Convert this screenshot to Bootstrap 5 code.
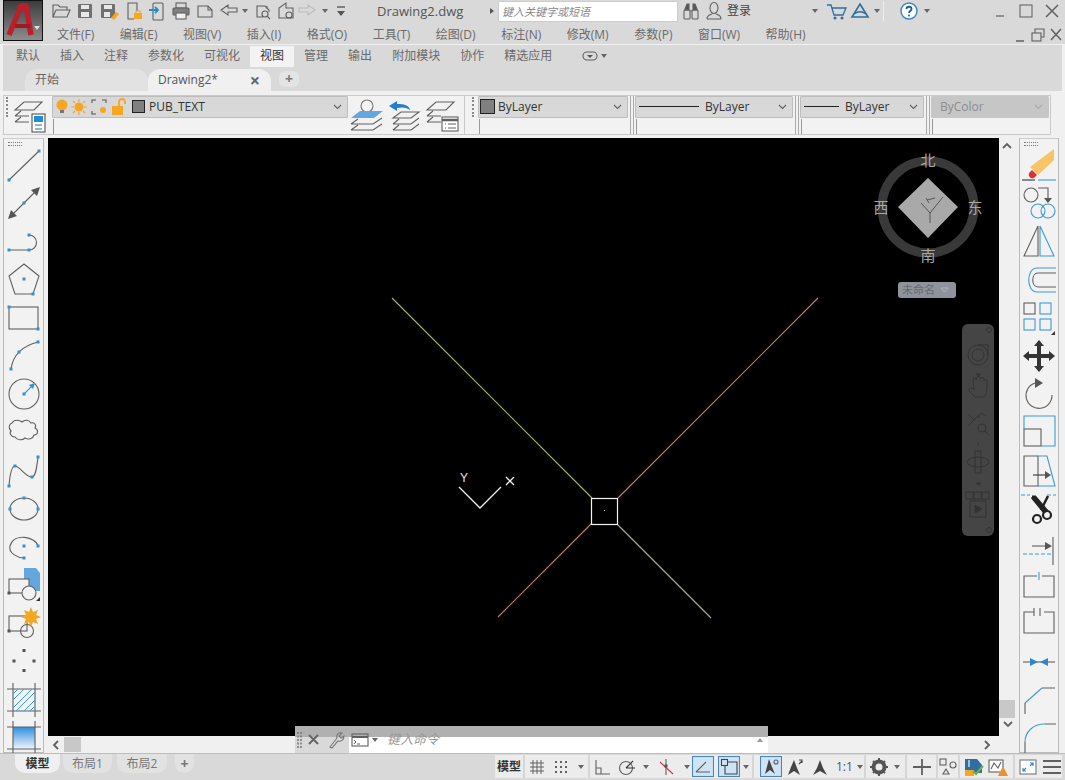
<!DOCTYPE html>
<html lang="zh-CN">
<head>
<meta charset="utf-8">
<title>Drawing2.dwg</title>
<link href="https://cdn.jsdelivr.net/npm/bootstrap@5.3.0/dist/css/bootstrap.min.css" rel="stylesheet">
<style>
html,body{margin:0;height:100%;overflow:hidden}
body{font-family:"Open Sans","Noto Sans CJK SC",sans-serif;font-size:12px;line-height:1;background:#f0f0f0;color:#555}
.app-shell{width:1065px;height:780px;overflow:hidden;background:#f0f0f0}
svg{display:block;flex:none;fill:none;stroke:#606060;stroke-width:1.1}
.bl{stroke:#3d9ad6}.bf{fill:#3a8fc9;stroke:none}.dk{fill:#555;stroke:none}.or{fill:#f5a623;stroke:none}
.hdr{height:44px;background:#d9d9d9}
.logo-box{width:40px;height:41px;margin-left:3px;border:1px solid #111;background:linear-gradient(#3c3c3c,#8d8d8d);flex:none}
.hdr-main{min-width:0}
.row-title{height:22px;padding-left:4px}
.row-menu{height:22px;padding-left:14px;padding-top:4px;gap:25.5px;color:#6a6a6a}
.caret-d{width:0;height:0;flex:none;border:3px solid transparent;border-top:4px solid #666;border-bottom:0;margin:0 1px}
.caret-r{width:0;height:0;flex:none;border:3px solid transparent;border-left:4px solid #555;border-right:0;margin-left:1px}
.doc-name{width:138px;padding-left:26px;font-size:13px;flex:none}
.search-box{width:180px;height:21px;background:#fff;border:1px solid #ccc;font-style:italic;font-size:11px;color:#888;padding-left:3px;margin-left:4px;display:flex;align-items:center;flex:none}
.login-txt{width:84px;margin-left:3px;flex:none;color:#444}
.v-sep{width:1px;height:20px;background:#eee;margin:0 13px 0 2px}
.gap-6{margin-left:6px}.gap-3{margin-left:3px}.gap-2p{margin-left:2px}
.rib-tabs{height:23px;margin:0 3px;background:#d9d9d9;padding:1px 0 0 3px;border-top:1px solid #f0f0f0;color:#6a6a6a}
.rib-tab{padding:0 10px;height:100%;display:flex;align-items:center}
.rib-tab-on{background:#f3f3f3;color:#333}
.rib-more{margin-left:20px}
.file-tabs{height:24px;margin:0 3px;background:#d9d9d9;padding-left:22px}
.file-tab{width:123px;height:22px;background:#e2e2e2;border-radius:12px 12px 0 0;display:flex;align-items:center;padding-left:10px;color:#666}
.file-tab-on{width:123px;background:#f0f0f0;color:#555;padding-left:10px;justify-content:space-between;padding-right:11px}
.tab-x{font-size:18px;color:#666;font-weight:700}
.tab-plus{width:20px;height:16px;margin-left:8px;background:#e4e4e4;border-radius:6px;display:flex;align-items:center;justify-content:center;color:#777;font-size:14px;font-weight:700}
.tool-wrap{height:48px;padding:4px 0 0 3px}
.pnl-main{width:462px;height:40px;border:1px solid #c9c9c9;background:#f2f2f2}
.pnl-rest{width:586px;height:40px;border:1px solid #c9c9c9;border-left:0;background:#f2f2f2;padding-left:5px}
.grip-v{width:3px;height:20px;margin:1px 0 0 2px;border-left:2px dotted #888;flex:none}
.grip-wrap{width:8px;flex:none}
.sep-box{width:7px;padding-left:1px;flex:none}
.sep-v{width:4px;height:38px;margin-left:1px;border-left:1px solid #aaa;border-right:1px solid #aaa}
.cell-col{flex:none}
.cell-1{width:296px;margin-left:2px}.cell-2{width:150px}.cell-3{width:158px}.cell-4{width:124px}.cell-5{width:118px}
.combo-top{height:22px;background:#d8d8d8;border:1px solid #bdbdbd;border-radius:1px;color:#333;display:flex;align-items:center;padding:0 5px 0 3px}
.combo-tight{padding-left:0}
.combo-swatch{padding-left:1px}
.combo-off{background:#c6c6c6;color:#8d8d8d;border-color:#c6c6c6;padding-left:8px}
.combo-low{height:15px;margin-top:1px;border-left:1px solid #999;margin-left:1px}
.swatch{width:13px;height:13px;background:#808080;border:1px solid #222;flex:none}
.swatch-lg{width:15px;height:15px}
.swatch-gap{margin-left:4px}
.chev{margin-left:auto}
.line-smp{height:1px;background:#222;flex:none}
.line-l{width:60px;margin-right:6px}
.line-m{width:35px;margin-right:6px}
.main-row{height:615px}
.side-bar{width:41px;height:615px;margin-left:3px;border:1px solid #bbb;border-top-color:#ccc;background:#f2f2f2;flex:none}
.side-r{width:40px;margin-left:4px}
.grip-h{width:14px;height:4px;margin:3px 0 0 4px;border-top:1px dotted #777;border-bottom:1px dotted #777}
.slot-stack{display:flex;flex-direction:column;align-items:center;padding-top:1px}
.slot-stack svg{margin-bottom:2.2px}
.center-col{width:967px;margin-left:4px;position:relative;flex:none}
.canvas-row{height:598px}
.draw-area{width:951px;height:598px;background:#000;position:relative;flex:none}
.draw-area>svg{position:absolute;left:0;top:0}
.nav-bar{position:absolute;left:914px;top:186px;width:32px;height:212px;background:#454545;border-radius:6px}
.v-scroll{width:16px;position:relative}
.v-thumb{position:absolute;left:0;right:0;top:562px;height:18px;background:#c8c8c8}
.h-scroll{height:17px;padding:0 0 0 4px}
.h-thumb{width:17px;height:15px;background:#c8c8c8;margin-left:4px}
.cmd-bar{position:absolute;left:247px;bottom:0;width:473px;height:27px;background:linear-gradient(#b0b0b0 11px,#fff 11px)}
.cmd-left{width:54px;height:27px;background:linear-gradient(#b0b0b0 11px,#d9d9d9 11px);flex:none}
.cmd-hint{font-style:italic;color:#999;font-size:13px;margin-left:8px;flex:none;position:relative}
.cmd-dd{position:absolute;left:462px;top:12px;border:3px solid transparent;border-bottom:4px solid #999;border-top:0}
.status-row{height:27px;background:#d9d9d9;border-top:1px solid #bdbdbd}
.sheet-tab{height:19px;border-radius:0 0 10px 10px;display:flex;align-items:center;justify-content:center;color:#777;background:#e2e2e2}
.sheet-on{width:45px;margin-left:15px;background:#f0f0f0;color:#333;font-weight:600}
.sheet-a{width:49px;margin-left:3px}
.sheet-b{width:50px;margin-left:5px}
.sheet-add{width:19px;margin-left:8px;font-size:14px;font-weight:700}
.status-bar{width:567px;height:23px;margin-left:auto;margin-right:3px;margin-top:1px;background:#ececec}
.st-model{width:28px;text-align:center;color:#333;flex:none;font-weight:600}
.st-sep{width:2px;height:23px;background:#d6d6d6;flex:none}
.st-dd{display:flex;align-items:center;justify-content:center;flex:none}
.w-16{width:16px}.w-15{width:15px}.w-10{width:10px}.w-11{width:11px}.w-12{width:12px}
.st-scale{width:31px;padding-left:3px;color:#555;display:flex;align-items:center;flex:none}
</style>
</head>
<body>
<div class="app-shell d-flex flex-column">

<!-- header -->
<div class="hdr d-flex">
  <div class="logo-box">
    <svg width="38" height="39" viewBox="0 0 38 39"><path d="M5 34 17 5h5l5 29" stroke="#bb1f2b" stroke-width="5.500" stroke-linejoin="round"/><path d="M11 25H26" stroke="#a01822" stroke-width="4"/><path d="M30 25h6l-3 4z" fill="#ddd" stroke="none"/></svg>
  </div>
  <div class="hdr-main flex-grow-1 d-flex flex-column">
    <div class="row-title d-flex align-items-center">
      <svg width="26" height="20" viewBox="0 0 26 20"><path d="M6 16V4h5l2 2h7v3M6 16h14l3-7H9z"/></svg>
      <svg width="24" height="20" viewBox="0 0 24 20"><rect x="5" y="3" width="14" height="14" rx="1" fill="#707070" stroke="none"/><rect x="8" y="4" width="8" height="4" fill="#e8e8e8" stroke="none"/><rect x="8" y="11" width="8" height="5" fill="#e8e8e8" stroke="none"/></svg>
      <svg width="24" height="20" viewBox="0 0 24 20"><rect x="4" y="3" width="14" height="14" rx="1" fill="#707070" stroke="none"/><rect x="7" y="4" width="8" height="4" fill="#e8e8e8" stroke="none"/><rect x="7" y="11" width="6" height="5" fill="#e8e8e8" stroke="none"/><path d="M14 17l5-6 3 2-5 6z" class="or"/></svg>
      <svg width="24" height="20" viewBox="0 0 24 20"><path d="M16 10V2H7v16h6"/><rect x="13" y="12" width="8" height="6" class="or"/><path d="M15 12v-2h4v2" stroke="#f5a623"/></svg>
      <svg width="24" height="20" viewBox="0 0 24 20"><rect x="8" y="2" width="10" height="17" rx="1"/><path d="M4 9h9M10 6l3 3-3 3" stroke="#1f8fd0" stroke-width="1.800"/></svg>
      <svg width="24" height="20" viewBox="0 0 24 20"><rect x="7" y="2" width="10" height="5"/><rect x="4" y="7" width="16" height="7" rx="1" fill="#808080" stroke="#606060"/><rect x="7" y="12" width="10" height="6" fill="#f0f0f0"/></svg>
      <svg width="24" height="20" viewBox="0 0 24 20"><path d="M5 5h10l4 4v7H5z"/><path d="M15 5v4h4"/></svg>
      <svg width="24" height="20" viewBox="0 0 24 20"><path d="M4 9l7-5v3h9v4h-9v3z"/></svg>
      <span class="caret-d"></span>
      <svg width="28" height="20" viewBox="0 0 28 20"><path d="M14 16H8V5h8l4 4v2M18 8v-3"/><circle cx="16" cy="13" r="3"/><path d="M18 15l3 3"/></svg>
      <svg width="18" height="20" viewBox="0 0 18 20"><path d="M2 17V7l7-5v5h7v10z"/><circle cx="12" cy="14" r="3"/></svg>
      <svg width="24" height="20" viewBox="0 0 24 20"><path d="M20 9l-7-5v3H4v4h9v3z" stroke="#bbb"/></svg>
      <span class="st-dd w-12"><span class="caret-d"></span></span>
      <svg width="20" height="20" viewBox="0 0 20 20"><path d="M6 6h8" stroke-width="1.500"/><path d="M6 10h8l-4 5z" class="dk"/></svg>
      <span class="doc-name">Drawing2.dwg</span>
      <span class="caret-r"></span>
      <span class="search-box">键入关键字或短语</span>
      <svg width="26" height="20" viewBox="0 0 26 20"><path d="M7 8l2-5h2v6l-4 0zM19 8l-2-5h-2v6h4z" fill="#555"/><rect x="6" y="9" width="6" height="9" rx="1"/><rect x="14" y="9" width="6" height="9" rx="1"/><path d="M12 10h2"/></svg>
      <svg width="20" height="20" viewBox="0 0 20 20"><ellipse cx="10" cy="7" rx="4" ry="5.500"/><path d="M3 18c0-4 3-4 5-5M17 18c0-4-3-4-5-5M3 18h14"/></svg>
      <span class="login-txt">登录</span>
      <span class="caret-d"></span>
      <svg class="gap-6" width="24" height="20" viewBox="0 0 24 20"><path d="M2 4h4l3 10h9l3-7H7" stroke="#2d6f9f" stroke-width="1.300"/><circle cx="10" cy="17" r="1.500" fill="#2d6f9f" stroke="none"/><circle cx="17" cy="17" r="1.500" fill="#2d6f9f" stroke="none"/></svg>
      <svg width="22" height="20" viewBox="0 0 22 20"><path d="M11 3l8 13H3z" stroke="#2d6f9f" stroke-width="1.600"/><path d="M5 13c4-3 8-3 12 0" stroke="#2d6f9f" stroke-width="1.400"/></svg>
      <span class="caret-d gap-3"></span>
      <span class="v-sep"></span>
      <svg width="24" height="20" viewBox="0 0 24 20"><circle cx="12" cy="10" r="8" stroke="#3d86c6" stroke-width="1.500" fill="#fff"/><path d="M9.500 8c0-3 5-3 5 0 0 2-2.500 2-2.500 4" stroke="#1e5d9c" stroke-width="1.800"/><circle cx="12" cy="14.500" r="1" fill="#1e5d9c" stroke="none"/></svg>
      <span class="caret-d gap-3"></span>
      <div class="ms-auto d-flex">
        <svg width="26" height="20" viewBox="0 0 26 20"><path d="M9 15h8" stroke-width="1.500" stroke="#777"/></svg>
        <svg width="26" height="20" viewBox="0 0 26 20"><rect x="7" y="4" width="12" height="12" stroke="#666"/></svg>
        <svg width="26" height="20" viewBox="0 0 26 20"><path d="M7 4l12 12M19 4 7 16" stroke-width="1.500"/></svg>
      </div>
    </div>
    <div class="row-menu d-flex align-items-center">
      <span>文件(F)</span><span>编辑(E)</span><span>视图(V)</span><span>插入(I)</span><span>格式(O)</span><span>工具(T)</span><span>绘图(D)</span><span>标注(N)</span><span>修改(M)</span><span>参数(P)</span><span>窗口(W)</span><span>帮助(H)</span>
      <div class="ms-auto d-flex">
        <svg width="18" height="20" viewBox="0 0 18 20"><path d="M5 16h8" stroke-width="1.500"/></svg>
        <svg width="18" height="20" viewBox="0 0 18 20"><rect x="3" y="8" width="9" height="8"/><path d="M6 8V4h9v8h-3"/></svg>
        <svg width="18" height="20" viewBox="0 0 18 20"><path d="M4 4l10 11M14 4 4 15" stroke-width="1.500"/></svg>
      </div>
    </div>
  </div>
</div>

<!-- ribbon -->
<div class="rib-tabs d-flex align-items-center">
  <span class="rib-tab">默认</span><span class="rib-tab">插入</span><span class="rib-tab">注释</span><span class="rib-tab">参数化</span><span class="rib-tab">可视化</span><span class="rib-tab rib-tab-on">视图</span><span class="rib-tab">管理</span><span class="rib-tab">输出</span><span class="rib-tab">附加模块</span><span class="rib-tab">协作</span><span class="rib-tab">精选应用</span>
  <svg class="rib-more" width="16" height="12" viewBox="0 0 16 12"><rect x="1" y="2" width="14" height="8" rx="4"/><path d="M5 5h6l-3 3z" class="dk"/></svg>
  <span class="caret-d gap-3"></span>
</div>
<div class="file-tabs d-flex align-items-end">
  <div class="file-tab">开始</div>
  <div class="file-tab file-tab-on"><span>Drawing2*</span><span class="tab-x">×</span></div>
  <div class="tab-plus align-self-center">+</div>
</div>

<!-- property toolbar -->
<div class="tool-wrap d-flex">
  <div class="pnl-main d-flex">
    <div class="grip-wrap"><div class="grip-v"></div></div>
    <svg width="38" height="38" viewBox="0 0 38 38"><path d="M3 14 12 6h18l-8 8zM3 20l6-5M3 20h14M3 26l6-5M3 26h14"/><rect x="20" y="18" width="13" height="18" fill="#fff" stroke="#555"/><rect x="22" y="20" width="9" height="6" fill="#1f8fd8" stroke="none"/><path d="M23 29h7M30 33h-7" stroke="#1d6fa8"/></svg>
    <div class="cell-col cell-1">
      <div class="combo-top combo-tight">
        <svg width="18" height="18" viewBox="1 0 18 18"><circle cx="10" cy="7" r="5.500" class="or"/><rect x="8" y="12" width="4" height="3" fill="#777" stroke="none"/></svg>
        <svg width="16" height="18" viewBox="1 0 16 18"><circle cx="9" cy="9" r="4.500" class="or"/><path d="M9 1v3M9 14v3M1 9h3M14 9h3M3 3l2 2M13 13l2 2M3 15l2-2M13 5l2-2" stroke="#f5a623"/></svg>
        <svg class="gap-3" width="20" height="18" viewBox="0 0 20 18"><path d="M2 5V2h4M12 2h4v3M2 13v3h4" stroke="#555"/><circle cx="13" cy="12" r="3" class="or"/></svg>
        <svg width="18" height="18" viewBox="0 0 18 18"><rect x="2" y="8" width="11" height="9" class="or"/><path d="M9 8V4c0-4 6-4 6 0v2" stroke="#f5a623" stroke-width="1.800"/></svg>
        <span class="swatch swatch-gap"></span>
        <span class="ms-1">PUB_TEXT</span>
        <svg class="chev" width="9" height="6" viewBox="0 0 9 6"><path d="M1 1l3.500 3.500L8 1"/></svg>
      </div>
      <div class="combo-low"></div>
    </div>
    <svg width="38" height="38" viewBox="0 0 38 38"><circle cx="19" cy="10" r="6" stroke="#777" fill="#f5f5f5"/><path d="M3 22l9-7h23l-9 7z" fill="#62a7dd" stroke="none"/><path d="M3 28l7-5M3 28h22l9-6M3 34l7-5M3 34h22l9-6"/></svg>
    <svg width="38" height="38" viewBox="0 0 38 38"><path d="M3 10 11 5v3c7 0 12 1 13 6-4-3-8-3-13-2v3z" fill="#1f80cf" stroke="none"/><path d="M7 22l8-6h18l-8 6zM7 28l6-5M7 28h18l8-6M7 34l6-5M7 34h18l8-6"/></svg>
    <svg width="38" height="38" viewBox="0 0 38 38"><path d="M3 14 12 6h18l-8 8zM3 20l6-5M3 20h14M3 26l6-5M3 26h14"/><rect x="18" y="21" width="16" height="14" fill="#fff"/><path d="M18 24h16" stroke-width="2.500"/><path d="M21 28h1M24 28h8M21 32h1M24 32h8"/></svg>
  </div>
  <div class="pnl-rest d-flex">
    <div class="grip-wrap"><div class="grip-v"></div></div>
    <div class="cell-col cell-2">
      <div class="combo-top combo-swatch"><span class="swatch swatch-lg"></span><span class="gap-3">ByLayer</span><svg class="chev" width="9" height="6" viewBox="0 0 9 6"><path d="M1 1l3.500 3.500L8 1"/></svg></div>
      <div class="combo-low"></div>
    </div>
    <div class="sep-box"><div class="sep-v"></div></div>
    <div class="cell-col cell-3">
      <div class="combo-top"><span class="line-smp line-l"></span><span>ByLayer</span><svg class="chev" width="9" height="6" viewBox="0 0 9 6"><path d="M1 1l3.500 3.500L8 1"/></svg></div>
      <div class="combo-low"></div>
    </div>
    <div class="sep-box"><div class="sep-v"></div></div>
    <div class="cell-col cell-4">
      <div class="combo-top"><span class="line-smp line-m"></span><span>ByLayer</span><svg class="chev" width="9" height="6" viewBox="0 0 9 6"><path d="M1 1l3.500 3.500L8 1"/></svg></div>
      <div class="combo-low"></div>
    </div>
    <div class="sep-box"><div class="sep-v"></div></div>
    <div class="cell-col cell-5">
      <div class="combo-top combo-off"><span>ByColor</span><svg class="chev" width="9" height="6" viewBox="0 0 9 6"><path d="M1 1l3.500 3.500L8 1" stroke="#aaa"/></svg></div>
      <div class="combo-low"></div>
    </div>
  </div>
</div>

<!-- main -->
<div class="main-row d-flex">
  <div class="side-bar">
    <div class="grip-h"></div>
    <div class="slot-stack">
      <svg width="36" height="36" viewBox="0 0 36 36"><path d="M3 33 33 4"/><rect x="1.500" y="31.500" width="3" height="3" class="bf"/><rect x="31.500" y="2.500" width="3" height="3" class="bf"/></svg>
      <svg width="36" height="36" viewBox="0 0 36 36"><path d="M5 31 31 5"/><path d="M2 34l3-9 6 6zM34 2l-9 3 6 6z" class="dk"/><rect x="16.500" y="16.500" width="3" height="3" class="bf"/></svg>
      <svg width="36" height="36" viewBox="0 0 36 36"><path d="M3 26H23A7.500 7.500 0 0 0 23 11"/><rect x="1.500" y="24.500" width="3" height="3" class="bf"/><rect x="21.500" y="24.500" width="3" height="3" class="bf"/><rect x="21.500" y="9.500" width="3" height="3" class="bf"/></svg>
      <svg width="36" height="36" viewBox="0 0 36 36"><path d="M18 2 33 14 27 32H9L3 14z"/><rect x="16.500" y="15.500" width="3" height="3" class="bf"/><rect x="25.500" y="30.500" width="3" height="3" class="bf"/></svg>
      <svg width="36" height="36" viewBox="0 0 36 36"><rect x="3" y="7" width="29" height="22"/><rect x="1.500" y="5.500" width="3" height="3" class="bf"/><rect x="30.500" y="27.500" width="3" height="3" class="bf"/></svg>
      <svg width="36" height="36" viewBox="0 0 36 36"><path d="M5 31Q8 10 32 4"/><rect x="3.500" y="29.500" width="3" height="3" class="bf"/><rect x="11.500" y="12.500" width="3" height="3" class="bf"/><rect x="30.500" y="2.500" width="3" height="3" class="bf"/></svg>
      <svg width="36" height="36" viewBox="0 0 36 36"><circle cx="18" cy="18" r="15"/><path d="M18 18 27 9" class="bl"/><path d="M29 7l-2 6-4-4z" class="bf"/><rect x="16.500" y="16.500" width="3" height="3" class="bf"/></svg>
      <svg width="36" height="36" viewBox="0 0 36 36"><path d="M6 8c2-4 8-3 10-1 3-3 7-2 9 1 3-1 6 2 4 5 4 2 3 7-1 7-1 4-6 5-9 3-3 3-8 2-10-1-4 0-6-4-4-6-3-3-2-7 1-8z"/></svg>
      <svg width="36" height="36" viewBox="0 0 36 36"><path d="M3 33C4 20 6 13 9 13 14 13 19 24 26 24 30 24 31 12 32 4"/><rect x="1.500" y="31.500" width="3" height="3" class="bf"/><rect x="7.500" y="11.500" width="3" height="3" class="bf"/><rect x="24.500" y="22.500" width="3" height="3" class="bf"/><rect x="30.500" y="2.500" width="3" height="3" class="bf"/></svg>
      <svg width="36" height="36" viewBox="0 0 36 36"><ellipse cx="18" cy="18" rx="14" ry="11"/><rect x="2.500" y="16.500" width="3" height="3" class="bf"/><rect x="30.500" y="16.500" width="3" height="3" class="bf"/><rect x="16.500" y="5.500" width="3" height="3" class="bf"/></svg>
      <svg width="36" height="36" viewBox="0 0 36 36"><path d="M32 17C30 8 8 3 4 17c-2 7 8 12 14 12"/><rect x="16.500" y="27.500" width="3" height="3" class="bf"/><rect x="16.500" y="15.500" width="3" height="3" class="bf"/><rect x="30.500" y="15.500" width="3" height="3" class="bf"/></svg>
      <svg width="36" height="36" viewBox="0 0 36 36"><path d="M18 1h12l4 5v18H18z" fill="#62a7dd" stroke="none"/><rect x="3" y="12" width="20" height="14" fill="#f2f2f2"/><circle cx="23" cy="26" r="7" fill="#f2f2f2"/><rect x="1.500" y="24.500" width="3" height="3" class="dk"/><path d="M34 30v4h-4z" fill="#333" stroke="none"/></svg>
      <svg width="36" height="36" viewBox="0 0 36 36"><rect x="3" y="11" width="18" height="15"/><circle cx="21" cy="26" r="6.500"/><path d="M25 2l2 5 5-2-2 5 5 2-5 2 2 5-5-2-2 5-2-5-5 2 2-5-5-2 5-2-2-5 5 2z" class="or"/><rect x="1.500" y="24.500" width="3" height="3" class="dk"/></svg>
      <svg width="36" height="36" viewBox="0 0 36 36"><rect x="16.500" y="5" width="3" height="3" class="dk"/><rect x="6.500" y="15.500" width="3" height="3" class="dk"/><rect x="26.500" y="15.500" width="3" height="3" class="dk"/><rect x="16.500" y="25" width="3" height="3" class="dk"/></svg>
      <svg width="36" height="36" viewBox="0 0 36 36"><path d="M1 7h34M1 29h34M7 1v34M29 1v34"/><path d="M7 18 18 7M7 26 26 7M10 29 29 10M18 29 29 18M7 12l5-5M24 29l5-5" class="bl" stroke-width="1"/></svg>
      <svg width="36" height="36" viewBox="0 0 36 36"><defs><linearGradient id="gd" x1="0" y1="0" x2="0" y2="1"><stop offset="0" stop-color="#2f8fe0"/><stop offset="1" stop-color="#f0f6fb"/></linearGradient></defs><rect x="7" y="7" width="22" height="22" fill="url(#gd)" stroke="none"/><path d="M1 7h34M1 29h34M7 1v34M29 1v34"/></svg>
    </div>
  </div>

  <div class="center-col d-flex flex-column">
    <div class="canvas-row d-flex">
      <div class="draw-area">
        <svg width="951" height="598" viewBox="48 138 951 598">
          <path d="M392 298 592 498M617 524 711 618" stroke="#9fb070" stroke-width="1.200"/>
          <path d="M818 298 618 498M592 523 498 617" stroke="#c07a68" stroke-width="1.200"/>
          <rect x="591.500" y="498.500" width="26" height="26" stroke="#f2f2f2" stroke-width="1.200"/>
          <rect x="604" y="510" width="1" height="1" fill="#ccc" stroke="none"/>
          <path d="M459 487 480 508 501 487" stroke="#eee" stroke-width="1.300"/>
          <text x="460" y="482" fill="#e6e6e6" stroke="none" font-size="12" font-family="Liberation Sans">Y</text>
          <path d="M506 477l8 8M514 477l-8 8" stroke="#eee" stroke-width="1.300"/>
          <circle cx="928" cy="207" r="46" stroke="#393939" stroke-width="9"/>
          <path d="M928 178 958 207 928 238 898 207z" fill="#a9a9a9" stroke="none"/>
          <path d="M921 203l9 10M930 213l13-16M930 213v10M926 198l3 5M927 200l8-2" stroke="#555" stroke-width="1"/>
          <g fill="#a8a8a8" stroke="none" font-size="15" text-anchor="middle" font-family="Noto Sans CJK SC">
            <text x="928" y="166">北</text><text x="928" y="261">南</text><text x="881" y="213">西</text><text x="975" y="213">东</text>
          </g>
          <rect x="898" y="282" width="58" height="16" rx="3" fill="#8f939c" stroke="none"/>
          <text x="902" y="294" fill="#676a71" stroke="none" font-size="11" font-family="Noto Sans CJK SC">未命名</text>
          <path d="M941 288h7l-3.500 4z" stroke="#b5b5bb" stroke-width="1"/>
        </svg>
        <div class="nav-bar">
          <svg width="32" height="212" viewBox="0 0 32 212">
            <g stroke="#333" stroke-width="1">
              <circle cx="27" cy="6" r="2.500"/>
              <circle cx="16" cy="31" r="10"/><circle cx="16" cy="31" r="6"/><path d="M16 21h10v10"/>
              <path d="M8 68c-3-5 2-5 4-2l-1-10c0-3 3-3 3 0l1-2c0-2 3-2 3 0l1 1c0-2 3-2 3 0v2c0-2 3-2 3 0 0 8 0 12-3 16H13z"/>
              <path d="M6 90l6 6M6 102l6-6M12 96l7-7M19 89l5 3"/><circle cx="20" cy="104" r="4"/><path d="M23 107l4 4"/>
              <ellipse cx="16" cy="138" rx="11" ry="5"/><path d="M13 127h6v22h-6zM16 122v-4"/>
              <rect x="4" y="168" width="7" height="7"/><rect x="12" y="168" width="7" height="7"/><rect x="20" y="168" width="7" height="7"/>
              <rect x="8" y="177" width="16" height="16"/><path d="M13 181l7 4-7 4z" fill="#333"/>
              <circle cx="27" cy="206" r="2.500"/>
            </g>
            <path d="M15 50h3l-1.500 2zM15 93h3M15 159h3l-1.500 2z" fill="#333" stroke="#333"/>
          </svg>
        </div>
      </div>
      <div class="v-scroll">
        <svg class="mx-auto mt-1" width="10" height="8" viewBox="0 0 10 8"><path d="M1 6l4-4 4 4" stroke-width="1.800"/></svg>
        <div class="v-thumb"></div>
        <svg class="position-absolute bottom-0 start-0 ms-1 mb-2" width="10" height="8" viewBox="0 0 10 8"><path d="M1 2l4 4 4-4" stroke-width="1.800"/></svg>
      </div>
    </div>
    <div class="h-scroll d-flex align-items-center">
      <svg width="8" height="10" viewBox="0 0 8 10"><path d="M6 1 2 5l4 4" stroke-width="1.800"/></svg>
      <div class="h-thumb"></div>
      <svg class="ms-auto me-4" width="8" height="10" viewBox="0 0 8 10"><path d="M2 1l4 4-4 4" stroke-width="1.800"/></svg>
    </div>
    <div class="cmd-bar d-flex align-items-center">
      <div class="cmd-left d-flex align-items-center">
        <svg width="12" height="20" viewBox="0 0 12 20"><path d="M3 2v16M6 2v16" stroke="#777" stroke-dasharray="2 1.500" stroke-width="1.500"/></svg>
        <svg width="14" height="14" viewBox="0 0 14 14"><path d="M2 2l9 9M11 2l-9 9" stroke="#666" stroke-width="2"/></svg>
        <svg class="gap-6" width="18" height="18" viewBox="0 0 18 18"><path d="M3 16 10 7c-1-3 1-6 5-5l-3 3 2 2 3-2c0 4-3 6-6 5l-6 7z" stroke="#777"/></svg>
      </div>
      <svg class="gap-2p" width="18" height="16" viewBox="0 0 18 16"><rect x="1" y="2" width="16" height="12"/><path d="M1 5h16" stroke-width="2"/><path d="M3 8l2 2-2 2M6 12h3" stroke-width="1"/></svg>
      <span class="caret-d gap-3"></span>
      <span class="cmd-hint">键入命令</span>
      <span class="cmd-dd"></span>
    </div>
  </div>

  <div class="side-bar side-r">
    <div class="grip-h"></div>
    <div class="slot-stack">
      <svg width="36" height="36" viewBox="0 0 36 36"><path d="M33 2 33 13 17 28l-8-8z" fill="#f7c467" stroke="none"/><path d="M11 23l5 5-3 3c-3 1-6-1-5-5z" fill="#d9303a" stroke="none"/><path d="M1 33H14" stroke="#333"/><path d="M17 33H35" class="bl"/></svg>
      <svg width="36" height="36" viewBox="0 0 36 36"><circle cx="10" cy="10" r="7"/><path d="M17 3h10v10"/><path d="M23 13h8l-4 5z" class="dk"/><circle cx="17" cy="26" r="7" class="bl"/><circle cx="27" cy="26" r="7" class="bl"/></svg>
      <svg width="36" height="36" viewBox="0 0 36 36"><path d="M17 2 3 32H17z"/><path d="M19 2 33 32H19z" class="bl"/></svg>
      <svg width="36" height="36" viewBox="0 0 36 36"><path d="M35 6H16C5 6 5 30 16 30H35" class="bl"/><path d="M35 11H17C10 11 10 25 17 25H35"/></svg>
      <svg width="36" height="36" viewBox="0 0 36 36"><rect x="3" y="3" width="11" height="11"/><rect x="19" y="3" width="11" height="11" class="bl"/><rect x="3" y="19" width="11" height="11" class="bl"/><rect x="19" y="19" width="11" height="11" class="bl"/><path d="M34 31v4h-4z" fill="#333" stroke="none"/></svg>
      <svg width="36" height="36" viewBox="0 0 36 36"><path d="M18 2l5 6h-3v8h8v-3l6 5-6 5v-3h-8v8h3l-5 6-5-6h3v-8H8v3l-6-5 6-5v3h8V8h-3z" fill="#333" stroke="none"/></svg>
      <svg width="36" height="36" viewBox="0 0 36 36"><path d="M14 7A13 13 0 1 0 31 19"/><path d="M14 2l8 5-8 5z" class="dk"/></svg>
      <svg width="36" height="36" viewBox="0 0 36 36"><rect x="3" y="14" width="17" height="17"/><path d="M3 14V1H34V31H20" class="bl"/></svg>
      <svg width="36" height="36" viewBox="0 0 36 36"><path d="M17 33H3V3H17z"/><path d="M17 3H26L34 33H17" class="bl"/><path d="M12 22H24" stroke="#333"/><path d="M24 18l6 4-6 4z" class="dk"/></svg>
      <svg width="36" height="36" viewBox="0 0 36 36"><path d="M0 4h9M26 4h9" class="bl" stroke-dasharray="4 2"/><path d="M11 6l13 16M11 6l3 0 12 14" stroke="#222" stroke-width="3"/><path d="M27 5l-7 14" stroke="#222" stroke-width="2.500"/><circle cx="16" cy="28" r="4" stroke="#222" stroke-width="2.200"/><circle cx="26" cy="24" r="4" stroke="#222" stroke-width="2.200"/></svg>
      <svg width="36" height="36" viewBox="0 0 36 36"><path d="M2 25h28" class="bl" stroke-dasharray="4 2"/><path d="M32 8V36"/><path d="M11 17H24"/><path d="M24 13l7 4-7 4z" class="dk"/></svg>
      <svg width="36" height="36" viewBox="0 0 36 36"><path d="M21 9H33V30H3V9H16"/><path d="M18 5v8" class="bl"/></svg>
      <svg width="36" height="36" viewBox="0 0 36 36"><path d="M13 7H3V28H33V7H23M13 3v8M19 3v8"/></svg>
      <svg width="36" height="36" viewBox="0 0 36 36"><path d="M2 18H34"/><path d="M9 14l8 4-8 4zM27 14l-8 4 8 4z" fill="#2f86c9" stroke="none"/></svg>
      <svg width="36" height="36" viewBox="0 0 36 36"><path d="M4 32V21M21 6H34"/><path d="M4 21 21 6" class="bl"/></svg>
      <svg width="36" height="36" viewBox="0 0 36 36"><path d="M4 34V22M24 4H35"/><path d="M4 22C4 12 12 4 24 4" class="bl"/></svg>
    </div>
  </div>
</div>

<!-- status -->
<div class="status-row d-flex">
  <div class="sheet-tab sheet-on">模型</div>
  <div class="sheet-tab sheet-a">布局1</div>
  <div class="sheet-tab sheet-b">布局2</div>
  <div class="sheet-tab sheet-add">+</div>
  <div class="status-bar d-flex align-items-center">
    <span class="st-model">模型</span>
    <span class="st-sep"></span>
    <svg width="24" height="20" viewBox="0 0 24 20"><path d="M5 6h14M5 10h14M5 14h14M8 3v14M12 3v14M16 3v14" stroke-width="1"/></svg>
    <svg width="24" height="20" viewBox="0 0 24 20"><path d="M6 5h12M6 10h12M6 15h12" stroke-dasharray="2 3" stroke-width="2"/></svg>
    <span class="st-dd w-15"><span class="caret-d"></span></span>
    <span class="st-sep"></span>
    <svg width="24" height="20" viewBox="0 0 24 20"><path d="M6 3V17H20M6 11h5v6"/></svg>
    <svg width="27" height="20" viewBox="0 0 27 20"><circle cx="12" cy="11" r="6.500"/><path d="M12 11h9M12 11l7-7" stroke="#333"/></svg>
    <span class="st-dd w-10"><span class="caret-d"></span></span>
    <svg width="30" height="20" viewBox="0 0 30 20"><path d="M15 2v16"/><path d="M9 5l13 12" stroke="#c83b3b"/><rect x="13.500" y="7.500" width="3" height="3" fill="#555" stroke="none"/></svg>
    <span class="st-dd w-11"><span class="caret-d"></span></span>
    <svg width="22" height="21" viewBox="0 0 22 21"><rect x=".5" y=".5" width="21" height="20" fill="#cfe3f5" stroke="#4a86b8"/><path d="M4 16H18M4 16 14 6"/></svg>
    <svg class="ms-1" width="22" height="21" viewBox="0 0 22 21"><rect x=".5" y=".5" width="21" height="20" fill="#cfe3f5" stroke="#4a86b8"/><path d="M7 6H19V18H7z" stroke="#444"/><rect x="3.500" y="3.500" width="6" height="6" fill="#cfe3f5" stroke="#444"/></svg>
    <span class="st-dd w-12"><span class="caret-d"></span></span>
    <span class="st-sep"></span>
    <svg class="gap-6" width="22" height="21" viewBox="0 0 22 21"><rect x=".5" y=".5" width="21" height="20" fill="#cfe3f5" stroke="#4a86b8"/><path d="M9 3 12 11 15 18 10 14 5 18z" fill="#444" stroke="none"/><circle cx="16" cy="6" r="2"/></svg>
    <svg width="25" height="20" viewBox="0 0 25 20"><path d="M12 3 15 11 18 18 12 14 6 18 9 10z" fill="#444" stroke="none"/><path d="M17 7l3-3M17 3h3v3" stroke="#444"/></svg>
    <svg width="26" height="20" viewBox="0 0 26 20"><path d="M13 3 16 11 20 18 13 14 6 18 10 11z" fill="#444" stroke="none"/></svg>
    <span class="st-scale"><span>1:1</span><span class="caret-d ms-1"></span></span>
    <span class="st-sep"></span>
    <svg class="gap-3" width="20" height="20" viewBox="0 0 20 20"><circle cx="10" cy="10" r="5.500" stroke="#555" stroke-width="4"/><path d="M10 1v18M1 10h18M4 4l12 12M16 4 4 16" stroke="#555" stroke-width="2" stroke-dasharray="3 12"/></svg>
    <span class="st-dd w-16"><span class="caret-d"></span></span>
    <span class="st-sep"></span>
    <svg class="ms-1" width="22" height="20" viewBox="0 0 22 20"><path d="M11 2v16M2 10h18" stroke-width="1.800"/></svg>
    <span class="st-sep gap-3"></span>
    <svg width="20" height="20" viewBox="0 0 20 20"><rect x="2" y="2" width="6" height="6"/><circle cx="15" cy="8" r="3"/><path d="M8 12l3 5H5z"/></svg>
    <span class="st-sep"></span>
    <svg class="gap-2p" width="24" height="20" viewBox="0 0 24 20"><path d="M3 2h12l5 6v8H3z" fill="#2f6f9f" stroke="none"/><path d="M3 13h9v6H3z" class="or"/><path d="M11 14l3 3 7-8" stroke="#6fb04a" stroke-width="2.200"/><path d="M7 3v7" stroke="#fff"/></svg>
    <svg width="24" height="20" viewBox="0 0 24 20"><rect x="3" y="3" width="14" height="12" fill="#fff"/><path d="M5 12l3-6 4 5 3-6"/><path d="M17 9l5 10H12z" fill="#e8912e" stroke="none"/></svg>
    <span class="st-sep gap-3"></span>
    <svg class="ms-1" width="18" height="16" viewBox="0 0 18 16"><rect x="1" y="1" width="16" height="14" fill="#fff" stroke="#777"/><path d="M4 12l3-3M4 9v3h3M14 4l-3 3M14 7V4h-3" stroke="#2f86c9"/></svg>
    <svg class="gap-6" width="18" height="16" viewBox="0 0 18 16"><path d="M0 2H18M0 8H18M0 14H18" stroke-width="2"/></svg>
  </div>
</div>

</div>
<script src="https://cdn.jsdelivr.net/npm/bootstrap@5.3.0/dist/js/bootstrap.bundle.min.js"></script>
</body>
</html>
